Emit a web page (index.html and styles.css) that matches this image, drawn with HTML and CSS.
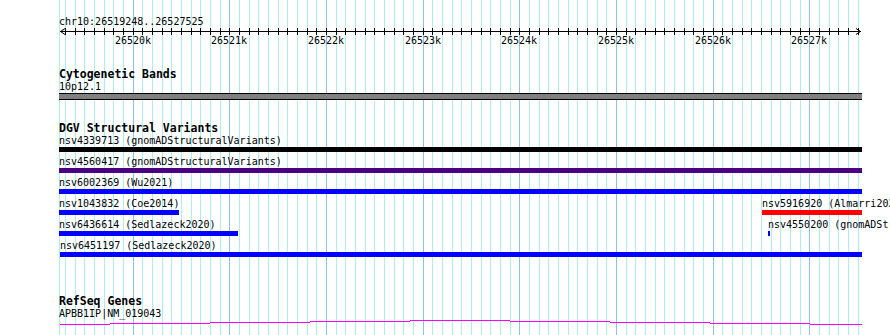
FILE: index.html
```html
<!DOCTYPE html>
<html lang="en">
<head>
    <meta charset="UTF-8">
    <meta name="viewport" content="width=device-width, initial-scale=1.0">
    <title>chr10:26519248..26527525</title>
    <link rel="stylesheet" href="styles.css">
</head>
<body>
    <div class="browser">
        <!-- gridlines, filled in by script.js -->
        <div class="grid" id="grid"></div>

        <!-- ruler -->
        <div class="ruler">
            <div class="locus">chr10:26519248..26527525</div>
            <svg class="axis" id="axis" width="890" height="8"></svg>
            <div class="tick-labels" id="tickLabels"></div>
        </div>

        <!-- cytogenetic bands -->
        <div class="track track-cyto">
            <div class="track-title">Cytogenetic Bands</div>
            <div class="row row-band">
                <div class="feature" style="left:59px;width:803px">
                    <div class="label">10p12.1</div>
                    <div class="band"></div>
                </div>
            </div>
        </div>

        <!-- DGV -->
        <div class="track track-dgv">
            <div class="track-title">DGV Structural Variants</div>
            <div class="row">
                <div class="feature" style="left:59px;width:803px">
                    <div class="label">nsv4339713 (gnomADStructuralVariants)</div>
                    <div class="bar bar-black"></div>
                </div>
            </div>
            <div class="row">
                <div class="feature" style="left:59px;width:803px">
                    <div class="label">nsv4560417 (gnomADStructuralVariants)</div>
                    <div class="bar bar-purple"></div>
                </div>
            </div>
            <div class="row">
                <div class="feature" style="left:59px;width:803px">
                    <div class="label">nsv6002369 (Wu2021)</div>
                    <div class="bar bar-blue"></div>
                </div>
            </div>
            <div class="row">
                <div class="feature" style="left:59px;width:120px">
                    <div class="label">nsv1043832 (Coe2014)</div>
                    <div class="bar bar-blue"></div>
                </div>
                <div class="feature" style="left:762px;width:100px">
                    <div class="label">nsv5916920 (Almarri2020)</div>
                    <div class="bar bar-red"></div>
                </div>
            </div>
            <div class="row">
                <div class="feature" style="left:59px;width:179px">
                    <div class="label">nsv6436614 (Sedlazeck2020)</div>
                    <div class="bar bar-blue"></div>
                </div>
                <div class="feature" style="left:768px;width:2px">
                    <div class="label">nsv4550200 (gnomADStructuralVariants)</div>
                    <div class="bar bar-blue"></div>
                </div>
            </div>
            <div class="row">
                <div class="feature" style="left:60px;width:802px">
                    <div class="label">nsv6451197 (Sedlazeck2020)</div>
                    <div class="bar bar-blue"></div>
                </div>
            </div>
        </div>

        <!-- RefSeq -->
        <div class="track track-refseq">
            <div class="track-title">RefSeq Genes</div>
            <div class="row row-gene">
                <div class="feature" style="left:59px;width:803px">
                    <div class="label">APBB1IP|NM_019043</div>
                    <svg class="gene" width="803" height="6">
                        <path d="M1 5.5H51M51 4.5H151M151 3.5H251M251 2.5H351M351 1.5H451M451 2.5H551M551 3.5H651M651 4.5H751M751 5.5H803" />
                    </svg>
                </div>
            </div>
        </div>
    </div>

    <script src="script.js"></script>
</body>
</html>
```

FILE: styles.css
```css
/* base */
body {
    margin: 0;
    background: #fff;
    font-family: 'DejaVu Sans Mono', monospace;
    font-size: 10px;
    color: #000;
    overflow: hidden;
}

.browser {
    position: relative;
    width: 890px;
    height: 100vh;
}

/* gridlines */
.grid {
    position: absolute;
    top: 0;
    bottom: 0;
    left: 0;
    right: 0;
    z-index: 0;
}

.gridline {
    position: absolute;
    top: 0;
    bottom: 0;
    width: 1px;
    background: #afeeee;
}

.gridline.major {
    background: #87c5e6;
}

/* ruler */
.ruler {
    position: relative;
    z-index: 1;
    padding-top: 16px;
}

.locus {
    padding-left: 59px;
    line-height: 11px;
}

.axis {
    display: block;
}

.axis line,
.axis path {
    stroke: #000;
    stroke-width: 1;
    fill: none;
}

.axis line {
    shape-rendering: crispEdges;
}

.tick-labels {
    position: relative;
    height: 11px;
    line-height: 11px;
}

.tick-labels span {
    position: absolute;
    top: 0;
}

/* tracks */
.track {
    position: relative;
    z-index: 1;
}

.track-cyto {
    margin-top: 22px;
}

.track-dgv {
    margin-top: 22px;
}

.track-refseq {
    margin-top: 34px;
}

.track-title {
    padding-left: 59px;
    font-weight: bold;
    font-size: 11.5px;
    line-height: 13px;
}

.row {
    position: relative;
    height: 21px;
}

.row-band {
    height: 19px;
}

.row-gene {
    height: 17px;
}

.feature {
    position: absolute;
    top: 0;
}

.label {
    line-height: 11px;
    white-space: nowrap;
}

.bar {
    margin-top: 1px;
    height: 5px;
}

.bar-black { background: #000; }
.bar-purple { background: #4b0082; }
.bar-blue { background: #0000ff; }
.bar-red { background: #ff0000; }

.band {
    margin-top: 1px;
    height: 5px;
    background: #808080;
    border-top: 1px solid #000;
    border-bottom: 1px solid #000;
}

.gene {
    display: block;
}

.gene path {
    stroke: #ff00ff;
    stroke-width: 1;
    fill: none;
    shape-rendering: crispEdges;
}
```

FILE: script.js
```js
// bp -> px for the 800px wide view of chr10:26519248..26527525
var START = 26519248;
var BP_PER_PX = 10.346;
var ORIGIN = 60;

function toPx(bp) {
    return Math.round(ORIGIN + (bp - START) / BP_PER_PX);
}

var grid = document.getElementById('grid');
var axis = document.getElementById('axis');
var labels = document.getElementById('tickLabels');
var SVG = 'http://www.w3.org/2000/svg';

function addGridline(x, major) {
    var line = document.createElement('div');
    line.className = major ? 'gridline major' : 'gridline';
    line.style.left = x + 'px';
    grid.appendChild(line);
}

function svgEl(name, attrs) {
    var el = document.createElementNS(SVG, name);
    for (var k in attrs) el.setAttribute(k, attrs[k]);
    axis.appendChild(el);
    return el;
}

// block edge
addGridline(59, false);

// axis line + arrows
svgEl('line', { x1: 60, y1: 4.5, x2: 861, y2: 4.5 });
svgEl('path', { d: 'M65 1.5L60.5 4.5L65 7.5' });
svgEl('path', { d: 'M856 1.5L860.5 4.5L856 7.5' });

for (var bp = 26519300; bp <= 26527500; bp += 100) {
    var x = toPx(bp);
    var major = bp % 1000 === 0;
    addGridline(x, major);
    svgEl('line', { x1: x + 0.5, y1: 1, x2: x + 0.5, y2: 8 });

    if (major) {
        var span = document.createElement('span');
        span.textContent = (bp / 1000) + 'k';
        span.style.left = (x - 18) + 'px';
        labels.appendChild(span);
    }
}
```
